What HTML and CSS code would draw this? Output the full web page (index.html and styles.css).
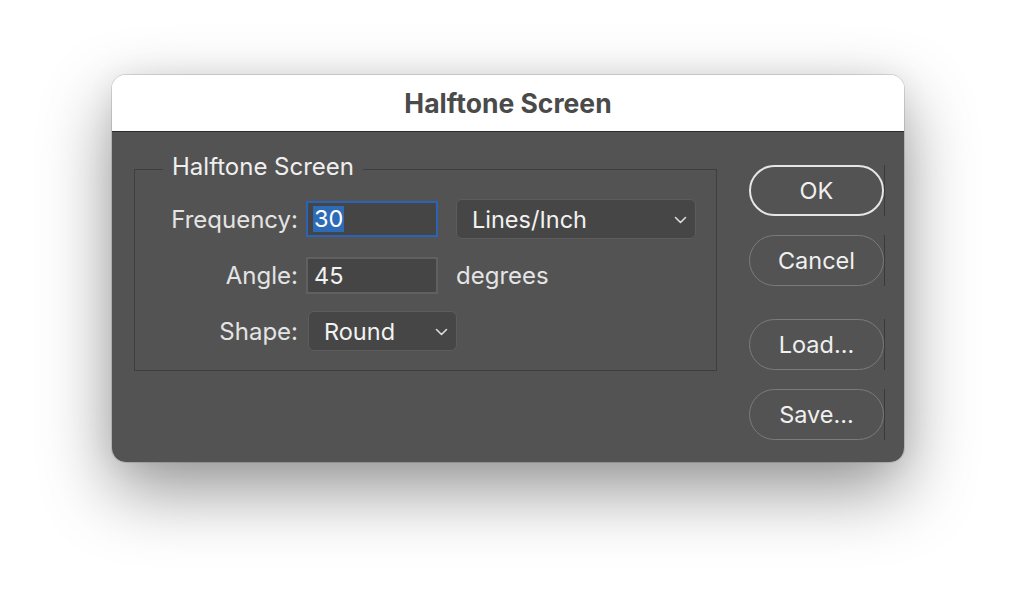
FILE: index.html
```html
<!DOCTYPE html>
<html lang="en">
<head>
<meta charset="utf-8">
<title>Halftone Screen</title>
<link rel="stylesheet" href="styles.css">
</head>
<body>
<div class="window">
  <div class="titlebar">Halftone Screen</div>
  <div class="content">
    <fieldset class="group">
      <legend class="legend">Halftone Screen</legend>
      <div class="row">
        <div class="label">Frequency:</div>
        <div class="field focused"><span class="sel">30</span></div>
        <div class="select wide"><span>Lines/Inch</span><svg class="chev" width="13" height="8" viewBox="0 0 13 8"><polyline points="1.5,1.5 6.5,6.5 11.5,1.5" fill="none" stroke="#dcdcdc" stroke-width="1.6" stroke-linecap="round" stroke-linejoin="round"/></svg></div>
      </div>
      <div class="row">
        <div class="label">Angle:</div>
        <div class="field">45</div>
        <div class="unit">degrees</div>
      </div>
      <div class="row">
        <div class="label">Shape:</div>
        <div class="select narrow"><span>Round</span><svg class="chev" width="13" height="8" viewBox="0 0 13 8"><polyline points="1.5,1.5 6.5,6.5 11.5,1.5" fill="none" stroke="#dcdcdc" stroke-width="1.6" stroke-linecap="round" stroke-linejoin="round"/></svg></div>
      </div>
    </fieldset>
    <div class="buttons">
      <div class="btn-wrap"><div class="btn default">OK</div></div>
      <div class="btn-wrap"><div class="btn">Cancel</div></div>
      <div class="btn-wrap spaced"><div class="btn">Load...</div></div>
      <div class="btn-wrap"><div class="btn">Save...</div></div>
    </div>
  </div>
</div>
</body>
</html>
```

FILE: styles.css
```css
html, body {
  margin: 0;
  padding: 0;
}
body {
  background: #ffffff;
  width: 1016px;
  height: 610px;
  overflow: hidden;
  box-sizing: border-box;
  padding: 75px 0 0 112px;
  font-family: "Inter", "Liberation Sans", sans-serif;
}
.window {
  width: 792px;
  height: 387px;
  border-radius: 14px;
  overflow: hidden;
  display: flex;
  flex-direction: column;
  box-shadow: 0 0 0 1px rgba(0,0,0,0.12), 0 28px 70px rgba(0,0,0,0.42), 0 0 30px rgba(0,0,0,0.06);
}
.titlebar {
  height: 57px;
  flex: none;
  background: #ffffff;
  border-bottom: 1px solid #2c2c2c;
  display: flex;
  align-items: center;
  justify-content: center;
  font-weight: 700;
  font-size: 26.5px;
  color: #4a4a4a;
  padding-top: 0;
  box-sizing: border-box;
}
.content {
  flex: 1;
  background: #535353;
  display: flex;
  align-items: flex-start;
  padding-left: 22px;
}
.group {
  margin: 20px 0 0 0;
  padding: 0 0 19px 0;
  width: 583px;
  box-sizing: border-box;
  border: 1px solid #3e3e3e;
  min-width: 0;
}
.legend {
  margin-left: 28px;
  padding: 1px 9px 5px 9px;
  font-size: 24px;
  line-height: 28px;
  color: #efefef;
}
.row {
  display: flex;
  align-items: center;
  height: 40px;
  margin-top: 16px;
}
.row:first-of-type {
  margin-top: 13px;
}
.label {
  width: 163px;
  text-align: right;
  font-size: 24px;
  color: #e4e4e4;
  margin-right: 8px;
}
.field {
  width: 132px;
  height: 37px;
  box-sizing: border-box;
  background: #454545;
  border: 2px solid #606060;
  font-size: 23.5px;
  color: #f2f2f2;
  display: flex;
  align-items: center;
  padding-left: 6px;
}
.field.focused {
  height: 36px;
  border-color: #2a63b8;
  padding-left: 5px;
}
.sel {
  background: #2e6bb6;
  color: #ffffff;
  padding: 0 1px;
  line-height: 26px;
}
.select {
  height: 40px;
  box-sizing: border-box;
  background: #464646;
  border: 1px solid #5d5d5d;
  border-radius: 6px;
  display: flex;
  align-items: center;
  justify-content: space-between;
  font-size: 23.5px;
  color: #f2f2f2;
  padding: 0 8px 0 15px;
}
.select.wide {
  width: 240px;
  margin-left: 18px;
}
.select.narrow {
  width: 149px;
  margin-left: 2px;
}
.chev {
  display: block;
  margin-top: 2px;
}
.unit {
  margin-left: 18px;
  font-size: 24px;
  color: #e4e4e4;
}
.buttons {
  margin: 33px 0 0 32px;
  display: flex;
  flex-direction: column;
  gap: 19px;
}
.btn-wrap {
  display: flex;
  border-right: 1px solid #3a3a3a;
}
.btn-wrap.spaced {
  margin-top: 14px;
}
.btn {
  width: 135px;
  height: 51px;
  box-sizing: border-box;
  border: 1.5px solid #7b7b7b;
  border-radius: 26px;
  display: flex;
  align-items: center;
  justify-content: center;
  font-size: 23.5px;
  color: #f0f0f0;
}
.btn.default {
  border: 2px solid #e6e6e6;
}
```
